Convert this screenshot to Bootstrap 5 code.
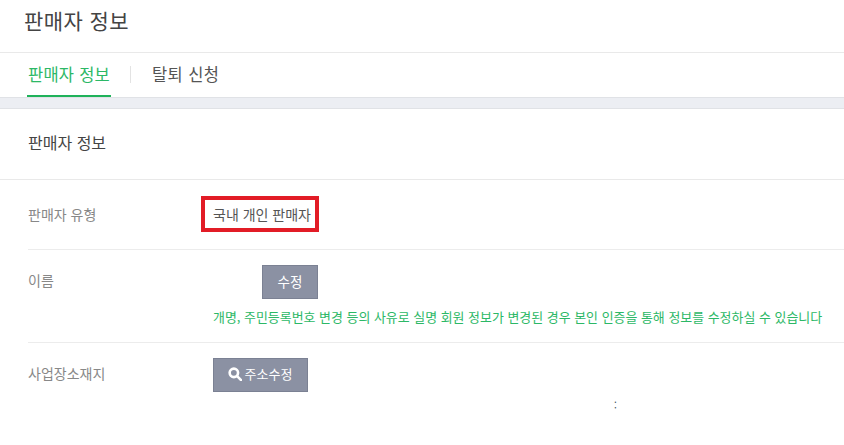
<!DOCTYPE html>
<html lang="ko">
<head>
  <meta charset="UTF-8" />
  <meta name="viewport" content="width=device-width, initial-scale=1.0"/>
  <title>판매자 정보</title>
  <link href="https://cdn.jsdelivr.net/npm/bootstrap@5.3.3/dist/css/bootstrap.min.css" rel="stylesheet">
  <style>
    html, body { height: 445px; overflow: hidden; }
    body { font-family: "Noto Sans CJK KR", "Liberation Sans", sans-serif; color: #444; background: #fff; }
    .page-head { height: 53px; padding: 3px 0 0 24px; border-bottom: 1px solid #e9e9e9; }
    .page-head h1 { font-size: 21px; font-weight: 400; line-height: 34px; margin: 0; letter-spacing: .4px; color: #444; }
    .tab-bar { height: 44px; padding-left: 27px; }
    .tab-item { font-size: 16.5px; line-height: 42px; height: 44px; color: #555; text-decoration: none; letter-spacing: .4px; }
    .tab-item.on { color: #2cb866; border-bottom: 2px solid #1fb25a; width: 84px; letter-spacing: .25px; }
    .tab-sep { width: 1px; height: 17px; background: #e3e3e3; margin: 13px 21px 0 19px; }
    .gap-strip { height: 12px; background: #eceef3; border-top: 1px solid #e0e2e6; border-bottom: 1px solid #e0e2e6; }
    .sec-head { height: 71px; padding-left: 28px; border-bottom: 1px solid #e9e9e9; font-size: 16px; line-height: 66px; color: #444; }
    .info-row { margin-left: 28px; border-bottom: 1px solid #ececec; }
    .info-row.first { height: 70px; padding-top: 16px; }
    .info-row.second { height: 93px; padding-top: 15px; }
    .info-row.third { padding-top: 15px; border-bottom: 0; }
    .info-label { width: 185px; flex: none; font-size: 14px; color: #888; line-height: 20px; }
    .first .info-label { padding-top: 8px; }
    .second .info-label { padding-top: 5px; }
    .third .info-label { padding-top: 5px; }
    .red-box { width: 118px; height: 36px; margin-left: -12px; border: 4px solid #e21c26; font-size: 14px; line-height: 28px; padding-left: 8px; white-space: nowrap; color: #555; }
    .btn-gray { background: #8b91a3; border: 1px solid #7b8193; border-radius: 0; color: #fff; font-size: 13.5px; padding: 0 0 2px; height: 34px; }
    .btn-gray:hover { background: #7b8193; color: #fff; border-color: #7b8193; }
    .btn-edit { width: 56px; margin-left: 49px; }
    .btn-addr { width: 95px; font-size: 13px; }
    .btn-addr svg { width: 14px; height: 14px; margin-right: 3px; margin-left: -1px; vertical-align: -2px; }
    .note-green { font-size: 12.95px; color: #2cb866; line-height: 16px; margin-top: 10px; white-space: nowrap; }
    .speck { position: absolute; left: 614px; top: 398px; font-size: 10px; line-height: 14px; color: #456; }
  </style>
</head>
<body>
  <div class="page-head"><h1>판매자 정보</h1></div>

  <div class="tab-bar d-flex">
    <a class="tab-item on text-center" href="#">판매자 정보</a>
    <span class="tab-sep"></span>
    <a class="tab-item" href="#">탈퇴 신청</a>
  </div>
  <div class="gap-strip"></div>

  <div class="sec-head">판매자 정보</div>

  <div class="info-row first d-flex">
    <div class="info-label">판매자 유형</div>
    <div class="red-box">국내 개인 판매자</div>
  </div>

  <div class="info-row second d-flex">
    <div class="info-label">이름</div>
    <div>
      <button type="button" class="btn btn-gray btn-edit">수정</button>
      <div class="note-green">개명, 주민등록번호 변경 등의 사유로 실명 회원 정보가 변경된 경우 본인 인증을 통해 정보를 수정하실 수 있습니다</div>
    </div>
  </div>

  <div class="info-row third d-flex">
    <div class="info-label">사업장소재지</div>
    <button type="button" class="btn btn-gray btn-addr">
      <svg viewBox="0 0 16 16" fill="none" stroke="#fff" stroke-width="3"><circle cx="6.7" cy="6.7" r="4.8"/><path d="M10.4 10.4 15 15" stroke-linecap="round"/></svg>주소수정
    </button>
  </div>
  <span class="speck">:</span>

  <script src="https://cdn.jsdelivr.net/npm/bootstrap@5.3.3/dist/js/bootstrap.bundle.min.js"></script>
</body>
</html>
